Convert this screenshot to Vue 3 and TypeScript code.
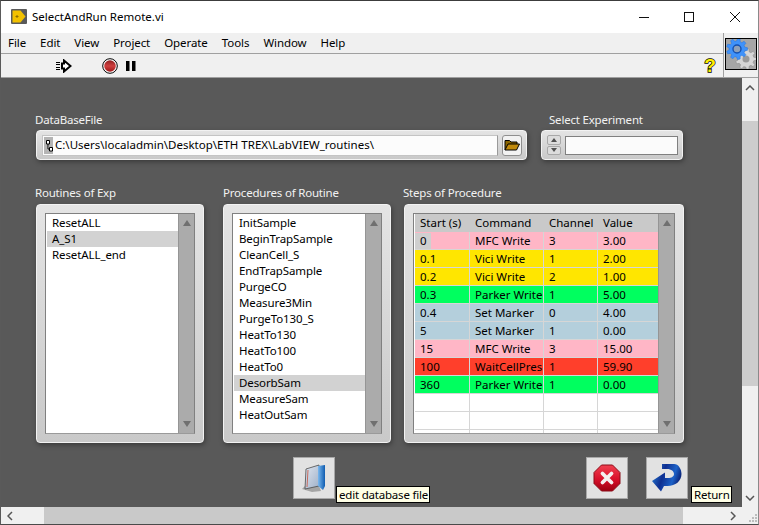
<script setup lang="ts">
const menus = ["File", "Edit", "View", "Project", "Operate", "Tools", "Window", "Help"];

const routines = ["ResetALL", "A_S1", "ResetALL_end"];
const procedures = [
  "InitSample",
  "BeginTrapSample",
  "CleanCell_S",
  "EndTrapSample",
  "PurgeCO",
  "Measure3Min",
  "PurgeTo130_S",
  "HeatTo130",
  "HeatTo100",
  "HeatTo0",
  "DesorbSam",
  "MeasureSam",
  "HeatOutSam",
];

const steps = [
  { start: "0", command: "MFC Write", channel: "3", value: "3.00", color: "#ffb6c6" },
  { start: "0.1", command: "Vici Write", channel: "1", value: "2.00", color: "#ffe600" },
  { start: "0.2", command: "Vici Write", channel: "2", value: "1.00", color: "#ffe600" },
  { start: "0.3", command: "Parker Write", channel: "1", value: "5.00", color: "#00ff5f" },
  { start: "0.4", command: "Set Marker", channel: "0", value: "4.00", color: "#b4cfdc" },
  { start: "5", command: "Set Marker", channel: "1", value: "0.00", color: "#b4cfdc" },
  { start: "15", command: "MFC Write", channel: "3", value: "15.00", color: "#ffb6c6" },
  { start: "100", command: "WaitCellPres", channel: "1", value: "59.90", color: "#ff3f2b" },
  { start: "360", command: "Parker Write", channel: "1", value: "0.00", color: "#00ff5f" },
  { start: "", command: "", channel: "", value: "", color: "#fff" },
  { start: "", command: "", channel: "", value: "", color: "#fff" },
  { start: "", command: "", channel: "", value: "", color: "#fff" },
];

// teeth for the two gears of the corner icon
function gearPath(cx: number, cy: number, inner: number, outer: number, teeth: number) {
  const pts: string[] = [];
  const step = (Math.PI * 2) / teeth;
  for (let i = 0; i < teeth; i++) {
    const a = i * step;
    const corners: [number, number][] = [
      [inner, a - step * 0.32],
      [outer, a - step * 0.18],
      [outer, a + step * 0.18],
      [inner, a + step * 0.32],
    ];
    for (const [r, t] of corners) {
      pts.push(`${(cx + r * Math.cos(t)).toFixed(2)} ${(cy + r * Math.sin(t)).toFixed(2)}`);
    }
  }
  return "M" + pts.join("L") + "Z";
}
</script>

<template>
  <div class="window">
    <header class="titlebar">
      <svg class="app-icon" width="16" height="15" viewBox="0 0 16 15">
        <rect width="16" height="15" rx="1" fill="#5a5a5a" />
        <path d="M1.500 1.500h8l5 6-5 6h-8z" fill="#f2c100" />
        <path d="M4.500 7.500h3M6 6v3" stroke="#8a6d00" stroke-width="1" />
      </svg>
      <span class="title">SelectAndRun Remote.vi</span>
      <div class="win-controls">
        <svg width="103" height="12" viewBox="0 0 103 12">
          <path d="M0 6.500h10" stroke="#111" />
          <rect x="45.500" y="1.500" width="9" height="9" fill="none" stroke="#111" />
          <path d="M91 1l10 10M101 1l-10 10" stroke="#111" fill="none" />
        </svg>
      </div>
    </header>

    <div class="bars">
      <div class="bars-left">
        <nav class="menubar">
          <span v-for="m in menus" :key="m" class="menu">{{ m }}</span>
        </nav>
        <div class="toolbar">
          <svg class="tb-run" width="16" height="14" viewBox="0 0 16 14">
            <path d="M8 1.500l6.500 5.500-6.500 5.500V9.500H6V4.500h2z" fill="#fff" stroke="#000" stroke-width="2" />
            <path d="M0 3.500h4M0 5.500h4M0 8.500h4M0 10.500h4" stroke="#000" />
          </svg>
          <svg class="tb-stop" width="16" height="16" viewBox="0 0 16 16">
            <defs>
              <linearGradient id="rec" x1="0" y1="0" x2="0" y2="1">
                <stop offset="0" stop-color="#8e2020" />
                <stop offset="0.5" stop-color="#d04040" />
                <stop offset="1" stop-color="#a01818" />
              </linearGradient>
            </defs>
            <circle cx="8" cy="8" r="7.300" fill="#fff" stroke="#000" />
            <circle cx="8" cy="8" r="5.800" fill="url(#rec)" />
          </svg>
          <svg class="tb-pause" width="10" height="10" viewBox="0 0 10 10">
            <path d="M0 0h3.500v10H0zM6 0h3.500v10H6z" fill="#000" />
          </svg>
          <svg class="tb-help" width="18" height="22" viewBox="0 0 18 22">
            <text x="9" y="17" text-anchor="middle" class="help-mark">?</text>
          </svg>
        </div>
      </div>
      <div class="corner">
        <svg class="gears" width="32" height="32" viewBox="0 0 32 32">
          <rect width="32" height="32" fill="#a6a6a6" />
          <path :d="gearPath(21, 21, 8, 10.500, 9)" fill="#d6d6d6" stroke="#8d8d8d" stroke-width="0.600" />
          <circle cx="21" cy="21" r="3.500" fill="#9a9a9a" />
          <path :d="gearPath(12, 11, 8, 10.500, 9)" fill="#3f92fa" stroke="#2a78e0" stroke-width="0.600" />
          <circle cx="12" cy="11" r="4" fill="#8fa0b8" stroke="#1450b0" stroke-width="1.400" />
          <rect x="0.500" y="0.500" width="31" height="31" fill="none" stroke="#000" />
        </svg>
      </div>
    </div>

    <div class="middle">
      <main class="panel">
        <div class="row row-top">
          <div class="control path-control">
            <label class="caption caption-path">DataBaseFile</label>
            <div class="frame frame-short">
              <div class="path-box">
                <svg class="path-tag" width="10" height="17" viewBox="0 0 10 17">
                  <rect x="1" width="9" height="17" fill="#b4b4b4" />
                  <path d="M3.500 3.500h3v3.500h-3zM6.500 10.500h3v3.500h-3zM5 7v5h1.500" fill="#fff" stroke="#000" />
                </svg>
                <span class="path-text">C:\Users\localadmin\Desktop\ETH TREX\LabVIEW_routines\</span>
              </div>
              <div class="browse">
                <svg width="16" height="12" viewBox="0 0 16 12">
                  <path d="M1 11V1.500h4.500L7 3h6v2.500" fill="#8a6500" stroke="#000" />
                  <path d="M1 11l3-6h11.500l-3 6z" fill="#c08a0c" stroke="#000" />
                </svg>
              </div>
            </div>
          </div>
          <div class="control experiment-control">
            <label class="caption caption-exp">Select Experiment</label>
            <div class="frame frame-short">
              <div class="spin">
                <span class="spin-btn"><i class="tri tri-up tri-small"></i></span>
                <span class="spin-btn"><i class="tri tri-down tri-small"></i></span>
              </div>
              <div class="exp-field"></div>
            </div>
          </div>
        </div>

        <div class="row row-lists">
          <div class="control list-control">
            <label class="caption caption-shift">Routines of Exp</label>
            <div class="frame frame-tall">
              <div class="list-box">
                <ul class="items">
                  <li v-for="r in routines" :key="r" :class="{ sel: r === 'A_S1' }">{{ r }}</li>
                </ul>
                <div class="lb-scroll"><i class="tri tri-up"></i><i class="tri tri-down"></i></div>
              </div>
            </div>
          </div>
          <div class="control list-control">
            <label class="caption">Procedures of Routine</label>
            <div class="frame frame-tall">
              <div class="list-box">
                <ul class="items">
                  <li v-for="p in procedures" :key="p" :class="{ sel: p === 'DesorbSam' }">{{ p }}</li>
                </ul>
                <div class="lb-scroll"><i class="tri tri-up"></i><i class="tri tri-down"></i></div>
              </div>
            </div>
          </div>
          <div class="control table-control">
            <label class="caption caption-shift">Steps of Procedure</label>
            <div class="frame frame-tall">
              <div class="list-box">
                <div class="table-clip">
                  <table class="steps">
                    <colgroup>
                      <col style="width: 55px" />
                      <col style="width: 74px" />
                      <col style="width: 54px" />
                      <col style="width: 61px" />
                    </colgroup>
                    <thead>
                      <tr>
                        <th>Start (s)</th>
                        <th>Command</th>
                        <th>Channel</th>
                        <th>Value</th>
                      </tr>
                    </thead>
                    <tbody>
                      <tr v-for="(s, i) in steps" :key="i" :style="{ background: s.color }">
                        <td><span :class="{ cursor: i === 0 }">{{ s.start }}</span></td>
                        <td>{{ s.command }}</td>
                        <td>{{ s.channel }}</td>
                        <td>{{ s.value }}</td>
                      </tr>
                    </tbody>
                  </table>
                </div>
                <div class="lb-scroll"><i class="tri tri-up"></i><i class="tri tri-down"></i></div>
              </div>
            </div>
          </div>
        </div>

        <div class="row row-actions">
          <div class="action action-edit">
            <svg width="24" height="28" viewBox="0 0 24 28">
              <defs>
                <linearGradient id="page" x1="0" y1="0" x2="1" y2="1">
                  <stop offset="0" stop-color="#dfe6f0" />
                  <stop offset="1" stop-color="#9fb0c8" />
                </linearGradient>
                <linearGradient id="spine" x1="0" y1="0" x2="1" y2="0">
                  <stop offset="0" stop-color="#7ab8ee" />
                  <stop offset="1" stop-color="#0f5cb0" />
                </linearGradient>
              </defs>
              <path d="M0 25l3-3h14l2 5-9 1z" fill="#8a8a8a" opacity="0.7" />
              <path d="M4 5l13-4v21L3 25z" fill="url(#page)" stroke="#4a4a4a" stroke-width="0.800" />
              <path d="M6 6L5 23" stroke="#c86a5a" stroke-width="1" />
              <path d="M16 2l7-1v21l-2 4-5-4z" fill="url(#spine)" />
            </svg>
            <span class="tip tip-edit">edit database file</span>
          </div>
          <div class="action action-cancel">
            <svg width="28" height="28" viewBox="0 0 28 28">
              <defs>
                <linearGradient id="oct" x1="0" y1="0" x2="0" y2="1">
                  <stop offset="0" stop-color="#f04050" />
                  <stop offset="0.55" stop-color="#d8102a" />
                  <stop offset="1" stop-color="#9c0010" />
                </linearGradient>
              </defs>
              <path d="M8.500 1h11L27 8.500v11L19.500 27h-11L1 19.500v-11z" fill="url(#oct)" stroke="#8c0d18" />
              <path d="M9.500 9.500l9 9M18.500 9.500l-9 9" stroke="#f4f0f0" stroke-width="3.800" stroke-linecap="round" />
            </svg>
          </div>
          <div class="action action-return">
            <svg width="30" height="28" viewBox="0 0 30 28">
              <defs>
                <linearGradient id="ret" x1="0" y1="0" x2="1" y2="0.300">
                  <stop offset="0" stop-color="#2a8ae0" />
                  <stop offset="0.45" stop-color="#0f2f90" />
                  <stop offset="0.8" stop-color="#1c62c8" />
                  <stop offset="1" stop-color="#0d2a80" />
                </linearGradient>
              </defs>
              <path
                d="M10 0h12c4.500 0 7.500 5 7.500 10 0 7-6 12-14 12H12l-3 5.500L0 17 13 8.500V14h3c3.500 0 6-1.500 6-4s-2.500-5-7-5H10z"
                fill="url(#ret)"
              />
            </svg>
            <span class="tip tip-return">Return</span>
          </div>
        </div>
      </main>

      <aside class="vscroll">
        <svg class="chev" width="10" height="6" viewBox="0 0 10 6"><path d="M1 5l4-4 4 4" fill="none" stroke="#555" stroke-width="1.500" /></svg>
        <div class="vthumb"></div>
        <svg class="chev" width="10" height="6" viewBox="0 0 10 6"><path d="M1 1l4 4 4-4" fill="none" stroke="#555" stroke-width="1.500" /></svg>
      </aside>
    </div>

    <footer class="hscroll">
      <svg class="chev-h" width="6" height="10" viewBox="0 0 6 10"><path d="M5 1L1 5l4 4" fill="none" stroke="#555" stroke-width="1.500" /></svg>
      <div class="hthumb"></div>
      <svg class="chev-h" width="6" height="10" viewBox="0 0 6 10"><path d="M1 1l4 4-4 4" fill="none" stroke="#555" stroke-width="1.500" /></svg>
      <svg class="grip" width="11" height="11" viewBox="0 0 11 11">
        <path d="M8 1h2v2H8zM5 4h2v2H5zM8 4h2v2H8zM2 7h2v2H2zM5 7h2v2H5zM8 7h2v2H8z" fill="#bdbdbd" />
      </svg>
    </footer>
  </div>
</template>

<style>
html,
body {
  margin: 0;
  overflow: hidden;
  background: #595959;
}
</style>

<style scoped>
.window {
  width: 759px;
  height: 525px;
  box-sizing: border-box;
  display: flex;
  flex-direction: column;
  border-top: 1px solid #3c3c3c;
  border-left: 1px solid #5a5a5a;
  border-right: 1px solid #8a8a8a;
  border-bottom: 1px solid #4a4a4a;
  font-family: "Noto Sans", "Open Sans", sans-serif;
  font-size: 11.5px;
  color: #000;
  background: #f0f0f0;
}

.titlebar {
  height: 32px;
  flex: none;
  display: flex;
  align-items: center;
  background: #fff;
  padding-left: 10px;
}
.app-icon {
  margin-top: -2px;
}
.title {
  margin-left: 5px;
  font-size: 11.5px;
  margin-top: -2px;
}
.win-controls {
  margin-left: auto;
  margin-right: 16px;
  margin-top: -1px;
  display: flex;
  line-height: 0;
}

.bars {
  height: 45px;
  flex: none;
  display: flex;
  background: #f0f0f0;
  border-bottom: 1px solid #a0a0a0;
  box-sizing: border-box;
}
.bars-left {
  flex: 1;
  display: flex;
  flex-direction: column;
}
.menubar {
  height: 21px;
  box-sizing: border-box;
  border-bottom: 1px solid #a0a0a0;
  display: flex;
  align-items: center;
  padding: 0 0 2px 7px;
  gap: 14px;
  letter-spacing: -0.08px;
}
.toolbar {
  flex: 1;
  display: flex;
  align-items: center;
  padding-left: 55px;
}
.tb-stop {
  margin-left: 30px;
}
.tb-pause {
  margin-left: 8px;
}
.tb-help {
  margin-left: auto;
  margin-right: 4px;
}
.help-mark {
  font-family: "Liberation Sans", sans-serif;
  font-size: 19px;
  font-weight: 700;
  fill: #ffef00;
  stroke: #000;
  stroke-width: 1.400px;
  paint-order: stroke;
}
.corner {
  width: 35px;
  box-sizing: border-box;
  border-left: 1px solid #a0a0a0;
  display: flex;
  align-items: flex-start;
  padding: 5px 0 0 1px;
}

.middle {
  flex: 1;
  min-height: 0;
  display: flex;
}
.panel {
  flex: 1;
  min-width: 0;
  background: #595959;
  padding: 34px 0 0 35px;
  box-sizing: border-box;
}
.row {
  display: flex;
}
.row-top {
  gap: 14px;
}
.row-top .caption {
  margin-bottom: 2px;
}
.row-lists {
  margin-top: 25px;
}
.row-lists .control + .control {
  margin-left: 19px;
}
.row-lists .table-control {
  margin-left: 13px !important;
}
.caption {
  display: block;
  height: 16px;
  line-height: 16px;
  font-size: 11.5px;
  letter-spacing: -0.2px;
  color: #f2f2f2;
  margin-bottom: 3px;
  white-space: nowrap;
}
.caption-path,
.caption-shift {
  margin-left: -1px;
}
.caption-exp {
  margin-left: 8px;
}

.frame {
  box-sizing: border-box;
  border-radius: 4px;
  border: 1px solid #f2f2f2;
  background: linear-gradient(#e4e4e4, #c9c9c9);
  box-shadow: 1px 2px 5px rgba(0, 0, 0, 0.35);
}
.frame-short {
  height: 30px;
  display: flex;
  align-items: center;
  padding: 0 4px 0 5px;
}
.path-control {
  width: 491px;
}
.experiment-control {
  width: 142px;
}
.path-box {
  width: 457px;
  height: 21px;
  box-sizing: border-box;
  background: #fcfcfc;
  border: 1px solid #c4c4c4;
  border-right-color: #9a9a9a;
  display: flex;
  align-items: center;
  line-height: 0;
}
.path-tag {
  flex: none;
}
.path-text {
  margin-left: 2px;
  line-height: 16px;
  white-space: nowrap;
  font-size: 11.5px;
}
.browse {
  width: 20px;
  height: 21px;
  margin-left: 4px;
  box-sizing: border-box;
  border: 1px solid #8f8f8f;
  border-radius: 3px;
  background: #f2f2f2;
  display: flex;
  align-items: center;
  justify-content: center;
}
.spin {
  width: 14px;
  height: 20px;
  display: flex;
  flex-direction: column;
  gap: 1px;
}
.spin-btn {
  flex: 1;
  box-sizing: border-box;
  background: #dcdcdc;
  border: 1px solid #a8a8a8;
  border-radius: 2px;
  display: flex;
  align-items: center;
  justify-content: center;
}
.exp-field {
  width: 113px;
  height: 19px;
  margin-left: 4px;
  box-sizing: border-box;
  border: 1px solid #808080;
  background: #fbfbfb;
}

.tri {
  display: block;
  width: 0;
  height: 0;
  border-left: 4px solid transparent;
  border-right: 4px solid transparent;
}
.tri-up {
  border-bottom: 6px solid #707070;
}
.tri-down {
  border-top: 6px solid #707070;
}
.tri-small {
  border-left-width: 3px;
  border-right-width: 3px;
  border-bottom-width: 4px;
  border-top-width: 4px;
  border-bottom-color: #505050;
  border-top-color: #505050;
}
.tri-small.tri-up {
  border-top: 0;
}
.tri-small.tri-down {
  border-bottom: 0;
}

.list-control {
  width: 168px;
}
.table-control {
  width: 280px;
}
.frame-tall {
  height: 239px;
  padding: 8px 8px 8px;
}
.list-box {
  height: 100%;
  box-sizing: border-box;
  display: flex;
  background: #fff;
  border: 1px solid #808080;
  border-bottom-color: #9a9a9a;
  padding-left: 1px;
}
.items {
  flex: 1;
  min-width: 0;
  list-style: none;
  margin: 0;
  padding: 1px 0 0;
  letter-spacing: -0.1px;
}
.items li {
  height: 16px;
  line-height: 16px;
  padding-left: 5px;
  white-space: nowrap;
}
.items li.sel {
  background: #d2d2d2;
}
.lb-scroll {
  width: 16px;
  flex: none;
  box-sizing: border-box;
  background: #ababab;
  border-left: 1px solid #959595;
  display: flex;
  flex-direction: column;
  justify-content: space-between;
  align-items: center;
  padding: 6px 0;
}
.table-clip {
  flex: 1;
  min-width: 0;
  overflow: hidden;
}
.steps {
  table-layout: fixed;
  width: 244px;
  border-collapse: separate;
  border-spacing: 0;
}
.steps th,
.steps td {
  height: 18px;
  box-sizing: border-box;
  padding: 0 0 0 5px;
  font-weight: 400;
  font-size: 11.5px;
  line-height: 16px;
  text-align: left;
  white-space: nowrap;
  overflow: hidden;
}
.steps th {
  background: #c9c9c9;
}
.steps td {
  border-right: 1px solid #d6d6d6;
  border-bottom: 1px solid #d6d6d6;
}
.steps td:last-child {
  border-right: 0;
}
.cursor {
  display: inline-block;
  background: #cfcfcf;
  margin-left: -5px;
  padding: 0 4px 0 5px;
}

.row-actions {
  margin-top: 14px;
  position: relative;
}
.action {
  width: 42px;
  height: 42px;
  box-sizing: border-box;
  border: 1px solid #a8a8a8;
  background: #e2e2e2;
  display: flex;
  align-items: center;
  justify-content: center;
  position: relative;
}
.action-edit {
  margin-left: 257px;
}
.action-cancel {
  margin-left: 251px;
}
.action-return {
  margin-left: 18px;
}
.tip {
  position: absolute;
  top: 28px;
  left: 42px;
  height: 17px;
  box-sizing: border-box;
  background: #ffffe6;
  border: 1px solid #000;
  padding: 0 1px 0 2px;
  line-height: 15px;
  font-size: 11.5px;
  letter-spacing: -0.2px;
  white-space: nowrap;
}
.tip-return {
  left: 44px;
}

.vscroll {
  width: 16px;
  flex: none;
  display: flex;
  flex-direction: column;
  align-items: center;
  background: #f0f0f0;
  padding: 7px 0 6px;
  box-sizing: border-box;
  justify-content: space-between;
}
.vthumb {
  width: 100%;
  height: 265px;
  margin-bottom: 80px;
  background: #cdcdcd;
}
.chev,
.chev-h,
.grip {
  display: block;
  flex: none;
}

.hscroll {
  height: 17px;
  flex: none;
  display: flex;
  align-items: center;
  background: #f0f0f0;
  padding-left: 6px;
  position: relative;
}
.hthumb {
  width: 639px;
  height: 100%;
  margin-left: 31px;
  background: #c9c9c9;
}
.hscroll .chev-h:nth-of-type(2) {
  margin-left: 47px;
}
.grip {
  position: absolute;
  right: 0;
  bottom: 0;
}
</style>
